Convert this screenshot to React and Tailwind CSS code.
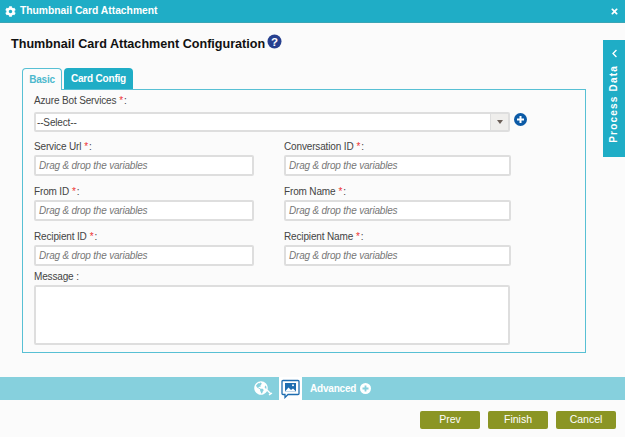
import React from "react";
import { FaCog, FaGlobeAmericas, FaTimes, FaChevronLeft } from "react-icons/fa";

function Label({ text, req = true }) {
  return (
    <div className="h-[14px] text-[10px] tracking-[-0.15px] leading-[14px] text-[#444]">
      {text}
      {req ? <span className="ml-[3px] text-[#e33]">*</span> : " "}
      <span className={req ? "ml-[1px]" : ""}>:</span>
    </div>
  );
}

function Field({ label, w = "w-[220px]" }) {
  return (
    <div className={w}>
      <Label text={label} />
      <div className="mt-[1px] h-[21px] border-2 border-[#dedede] rounded-[2px] bg-white flex items-center pl-[3px] text-[10px] tracking-[-0.2px] italic text-[#777]">
        Drag &amp; drop the variables
      </div>
    </div>
  );
}

function Row({ a, b }) {
  return (
    <div className="flex gap-[30px]">
      <Field label={a} />
      <Field label={b} w="w-[227px]" />
    </div>
  );
}

export default function App() {
  return (
    <div className="relative w-[625px] h-[437px] overflow-hidden bg-[#fbfbfb] font-['Liberation_Sans',Arial,sans-serif]">
      <div className="h-[23px] bg-[#1fadc6] border-b border-[#3aa5b5] flex items-center pl-[5px] pr-[6px] text-white">
        <FaCog size={11} />
        <span className="ml-[4px] text-[10.3px] font-bold">Thumbnail Card Attachment</span>
        <FaTimes size={9} className="ml-auto" />
      </div>

      <div className="pl-[11px] pt-[11px] h-[33px] flex items-start">
        <span className="text-[12.6px] leading-[20px] font-bold text-[#111]">Thumbnail Card Attachment Configuration</span>
        <svg width="15" height="15" viewBox="0 0 15 15" className="ml-[2px] mt-[0px]">
          <circle cx="7.5" cy="7.5" r="7" fill="#27408f" />
          <text x="7.5" y="11.5" textAnchor="middle" fontSize="11.5" fontWeight="700" fill="#fff" fontFamily="Liberation Sans">?</text>
        </svg>
      </div>

      <div className="ml-[22px] mt-[12px] w-[564px]">
        <div className="flex h-[21px] items-end gap-[2px]">
          <div className="relative z-10 w-[40px] h-[22px] -mb-px bg-[#fbfbfb] border border-b-0 border-[#57c0d4] rounded-t-[4px] flex items-center justify-center text-[10px] tracking-[-0.2px] font-bold text-[#4cb8cd]">
            Basic
          </div>
          <div className="w-[69px] h-[21px] bg-[#1fadc6] rounded-t-[4px] flex items-center justify-center text-[10px] tracking-[-0.2px] font-bold text-white">
            Card Config
          </div>
        </div>
        <div className="h-[264px] border border-[#57c0d4] pl-[11px] pt-[4px]">
          <Label text="Azure Bot Services" />
          <div className="mt-[4px] flex items-start">
            <div className="w-[476px] h-[20px] border-2 border-[#dedede] rounded-[2px] bg-white flex items-center pl-[1px] text-[10px] tracking-[-0.15px] text-[#444]">
              <span className="flex-1">--Select--</span>
              <span className="w-[18px] h-full bg-[#efeeec] border-l border-[#dedede] flex items-center justify-center">
                <span className="w-0 h-0 border-l-[3px] border-r-[3px] border-t-[4px] border-l-transparent border-r-transparent border-t-[#6b5f58]" />
              </span>
            </div>
            <svg width="13" height="13" viewBox="0 0 13 13" className="ml-[4px] mt-[1px]">
              <circle cx="6.5" cy="6.5" r="6.5" fill="#0b5aa6" />
              <path d="M6.5 3v7M3 6.5h7" stroke="#fff" strokeWidth="2" />
            </svg>
          </div>
          <div className="mt-[8px] flex flex-col gap-[9px]">
            <Row a="Service Url" b="Conversation ID" />
            <Row a="From ID" b="From Name" />
            <Row a="Recipient ID" b="Recipient Name" />
          </div>
          <div className="mt-[4px]">
            <Label text="Message" req={false} />
            <div className="mt-[1px] w-[476px] h-[60px] border-2 border-[#dedede] rounded-[2px] bg-white" />
          </div>
        </div>
      </div>

      <div className="mt-[24px] h-[23px] bg-[#86d0dd] flex">
        <div className="w-[279px] relative flex items-center justify-end pr-[9px]">
          <FaGlobeAmericas size={14} color="#fff" className="-mt-[2px] mr-[2px]" />
          <svg width="7" height="7" viewBox="0 0 7 7" className="absolute right-[6px] top-[12px]">
            <path d="M1 1l4 4M3 6l3-2" stroke="#fff" strokeWidth="1.4" />
          </svg>
        </div>
        <div className="w-[23px] bg-white flex items-center justify-center">
          <svg width="19" height="20" viewBox="0 0 19 20">
            <path d="M2 1.5h15a1 1 0 0 1 1 1v12a1 1 0 0 1-1 1H7l-3 3v-3H2a1 1 0 0 1-1-1v-12a1 1 0 0 1 1-1z" fill="#fff" stroke="#1f6db0" strokeWidth="1.3" />
            <rect x="4" y="4" width="11" height="8.5" fill="#1f6db0" />
            <path d="M4 12.5l3.5-4 2.5 2.5 2-1.5 3 3z" fill="#fff" />
            <circle cx="12" cy="6.3" r="1" fill="#fff" />
          </svg>
        </div>
        <div className="flex items-center pl-[8px] text-[10px] tracking-[-0.2px] font-bold text-white">
          Advanced
          <svg width="11" height="11" viewBox="0 0 11 11" className="ml-[4px]">
            <circle cx="5.5" cy="5.5" r="5.5" fill="#fff" />
            <path d="M5.5 2.5v6M2.5 5.5h6" stroke="#86d0dd" strokeWidth="1.8" />
          </svg>
        </div>
      </div>

      <div className="mt-[11px] flex justify-end gap-[8px] pr-[9px]">
        {["Prev", "Finish", "Cancel"].map((t) => (
          <div key={t} className="w-[60px] h-[18px] bg-[#8b9524] rounded-[2px] flex items-center justify-center text-[10.5px] text-white">
            {t}
          </div>
        ))}
      </div>

      <div className="absolute left-[603px] top-[40px] w-[22px] h-[117px] bg-[#1fadc6] flex flex-col items-center text-white">
        <FaChevronLeft size={9} className="mt-[9px]" />
        <span className="mt-[7px] [writing-mode:vertical-rl] rotate-180 text-[10px] font-bold tracking-[1.2px] leading-[22px]">Process Data</span>
      </div>
    </div>
  );
}
